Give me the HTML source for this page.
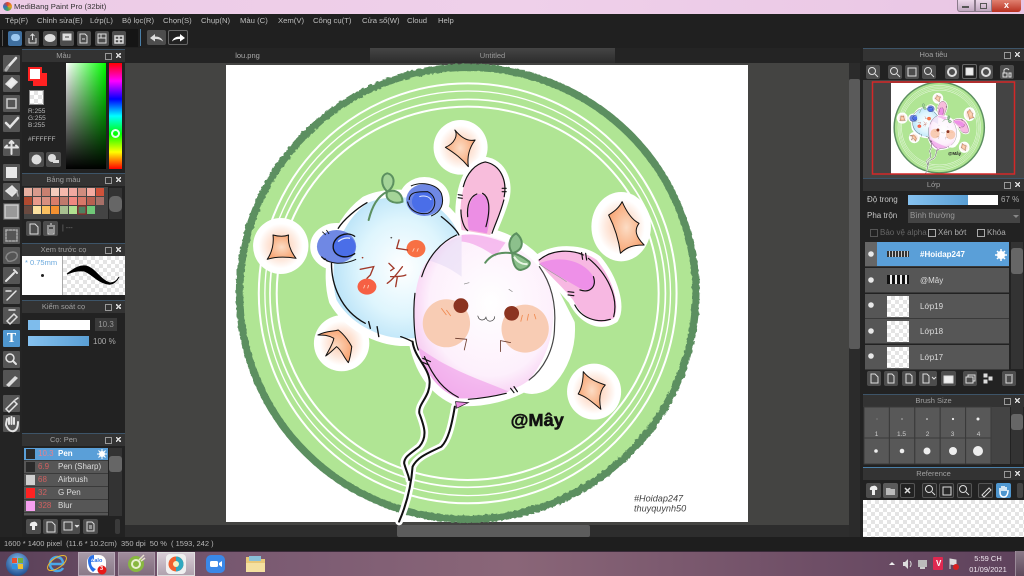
<!DOCTYPE html>
<html lang="vi"><head><meta charset="utf-8"><title>MediBang Paint Pro</title>
<style>
html,body{margin:0;padding:0;width:1024px;height:576px;overflow:hidden;background:#1f1f1f;font-family:"Liberation Sans","DejaVu Sans",sans-serif;color:#bbb}
div,span{position:absolute;box-sizing:border-box;white-space:nowrap}
.t{font-size:8px;line-height:10px;color:#c4c4c4}
.m{font-size:7.700px;line-height:10px;color:#bdbdbd;top:16px}
.hd{background:#333;border-top:1px solid #3d5468;height:13px;text-align:center;font-size:7.500px;line-height:12px;color:#a0a0a0;padding-right:20px}
.hd:after{content:"";position:absolute;right:4px;top:3px;width:5px;height:5px;background:linear-gradient(45deg,transparent 40%,#ddd 40%,#ddd 60%,transparent 60%),linear-gradient(-45deg,transparent 40%,#ddd 40%,#ddd 60%,transparent 60%)}
.hd:before{content:"";position:absolute;right:13px;top:3px;width:5px;height:5px;border:1px solid #999}
.b{background:#4d4d4d;border-radius:2px;width:15px;height:15px}
.tb{background:#555;border-radius:1px;width:17px;height:17px;left:3px}
.ck{background:repeating-conic-gradient(#e4e4e4 0 25%,#fff 0 50%) 0 0/8px 8px}
svg{position:absolute;overflow:visible}
.row{left:24px;width:84px;height:13px;background:#565656;border-bottom:1px solid #3a3a3a;font-size:8px;line-height:12px;color:#ddd}
.lay{left:865px;width:144px;height:25px;background:#565656;border-bottom:1px solid #3a3a3a;font-size:8px;line-height:25px;color:#ddd}
.cb{width:8px;height:8px;border:1px solid #aaa}
</style></head><body>

<!-- title bar -->
<div style="left:0;top:0;width:1024px;height:14px;background:linear-gradient(90deg,#eccbe6,#efd0ea 50%,#e9c6e4)"></div>
<div style="left:3px;top:2px;width:9px;height:9px;border-radius:50%;background:conic-gradient(#e04030,#e8a020,#40a060,#3070c0,#e04030)"></div>
<div style="left:14px;top:2px;font-size:7.700px;line-height:10px;color:#333">MediBang Paint Pro (32bit)</div>
<div style="left:957px;top:0;width:18px;height:12px;background:linear-gradient(#ecd8ea,#c0a8c0);border:1px solid #8a7a8a;border-top:0;border-radius:0 0 0 3px"></div>
<div style="left:962px;top:6px;width:7px;height:2px;background:#555"></div>
<div style="left:975px;top:0;width:17px;height:12px;background:linear-gradient(#ecd8ea,#c0a8c0);border:1px solid #8a7a8a;border-top:0"></div>
<div style="left:980px;top:3px;width:7px;height:6px;border:1px solid #555"></div>
<div style="left:992px;top:0;width:29px;height:12px;background:linear-gradient(#e08070,#b83020);border-radius:0 0 3px 0"></div>
<div style="left:992px;top:0;width:29px;text-align:center;font-size:9px;line-height:11px;color:#fff;font-weight:bold">x</div>

<!-- menu -->
<div style="left:0;top:14px;width:1024px;height:34px;background:#202020"></div>
<span class="m" style="left:5px">Tệp(F)</span>
<span class="m" style="left:37px">Chỉnh sửa(E)</span>
<span class="m" style="left:90px">Lớp(L)</span>
<span class="m" style="left:122px">Bộ lọc(R)</span>
<span class="m" style="left:163px">Chọn(S)</span>
<span class="m" style="left:201px">Chụp(N)</span>
<span class="m" style="left:240px">Màu (C)</span>
<span class="m" style="left:278px">Xem(V)</span>
<span class="m" style="left:313px">Công cụ(T)</span>
<span class="m" style="left:362px">Cửa sổ(W)</span>
<span class="m" style="left:407px">Cloud</span>
<span class="m" style="left:438px">Help</span>

<!-- toolbar -->
<div style="left:0;top:29px;width:138px;height:18px;background:#151515"></div>
<div style="left:2px;top:30px;width:1px;height:16px;background:#555"></div>
<div class="b" style="left:8px;top:31px;width:14px;background:#3f6f9f"></div>
<div style="left:11px;top:34px;width:9px;height:7px;border-radius:4px;background:#9cc8f0"></div>
<div class="b" style="left:25px;top:31px;width:14px"></div>
<div class="b" style="left:43px;top:31px;width:14px"></div>
<div class="b" style="left:60px;top:31px;width:14px"></div>
<div class="b" style="left:77px;top:31px;width:14px"></div>
<div class="b" style="left:95px;top:31px;width:14px"></div>
<div class="b" style="left:112px;top:31px;width:14px"></div>
<svg style="left:0;top:0" width="200" height="48" fill="none" stroke="#ddd" stroke-width="1">
<path d="M29 38v5h7v-5M32.500 40v-6M30.500 36l2-2 2 2"/>
<ellipse cx="50" cy="38" rx="5" ry="3.500" fill="#ddd"/>
<rect x="63" y="34" width="8" height="6" fill="#ddd"/><path d="M65 37h4" stroke="#444"/>
<path d="M80 34h5l2 2v7h-7zM82 39h3"/>
<path d="M98 34h8v9h-8zM98 38h8M101 34v4"/>
<path d="M115 36h8v7h-8zM115 39.500h8M119 36v7" stroke-width="1.500"/>
</svg>
<div style="left:140px;top:29px;width:1px;height:17px;background:#4a7fa8"></div>
<div class="b" style="left:147px;top:30px;width:19px;height:15px"></div>
<svg style="left:0;top:0" width="200" height="48"><path d="M150 38l5-4v2.500c4 0 7 1.500 8 5-2-2-5-2.500-8-2.500v2.500z" fill="#ddd"/></svg>
<div style="left:168px;top:30px;width:20px;height:15px;border:1px solid #666;border-radius:2px;background:#222"></div>
<svg style="left:0;top:0" width="200" height="48"><path d="M185 38l-5-4v2.500c-4 0-7 1.500-8 5 2-2 5-2.500 8-2.500v2.500z" fill="#fff"/></svg>

<!-- tabs + canvas area -->
<div style="left:125px;top:48px;width:735px;height:15px;background:#242424"></div>
<div style="left:370px;top:48px;width:245px;height:15px;background:linear-gradient(#454545,#2c2c2c)"></div>
<div style="left:125px;top:51px;width:245px;text-align:center;font-size:7.500px;line-height:10px;color:#aaa">lou.png</div>
<div style="left:370px;top:51px;width:245px;text-align:center;font-size:7.500px;line-height:10px;color:#999">Untitled</div>
<div style="left:125px;top:63px;width:724px;height:462px;background:#444442"></div>
<div style="left:125px;top:525px;width:724px;height:12px;background:#2d2d2d"></div>
<div style="left:397px;top:525px;width:193px;height:12px;background:#5c5c5c;border-radius:2px"></div>
<div style="left:849px;top:63px;width:11px;height:474px;background:#2b2b2b"></div>
<div style="left:849px;top:79px;width:11px;height:270px;background:#5a5a5a;border-radius:2px"></div>
<div style="left:226px;top:65px;width:522px;height:457px;background:#fff"></div>

<!-- ARTWORK -->
<svg style="left:0;top:0" width="1024" height="576" viewBox="0 0 1024 576">
<defs>
<radialGradient id="bl" cx=".55" cy=".5" r=".62"><stop offset="0" stop-color="#fff"/><stop offset=".55" stop-color="#def5fd"/><stop offset="1" stop-color="#b0def6"/></radialGradient>
<radialGradient id="pk" cx=".55" cy=".42" r=".68"><stop offset="0" stop-color="#fff"/><stop offset=".65" stop-color="#fdf0fc"/><stop offset=".9" stop-color="#f6c8f0"/><stop offset="1" stop-color="#f0a4ea"/></radialGradient>
<radialGradient id="st"><stop offset="0" stop-color="#fcdcc4"/><stop offset="1" stop-color="#f8a878"/></radialGradient>
<radialGradient id="gl"><stop offset="0" stop-color="#fbc8a8"/><stop offset=".5" stop-color="#fee8dc"/><stop offset=".8" stop-color="#fff"/><stop offset="1" stop-color="#fff"/></radialGradient>
<filter id="rough" x="-5%" y="-5%" width="110%" height="110%"><feTurbulence type="fractalNoise" baseFrequency=".09" numOctaves="2" seed="3"/><feDisplacementMap in="SourceGraphic" scale="9"/></filter>
<g id="art">
<ellipse cx="718" cy="700" rx="675" ry="678" fill="#b0e594"/>
<ellipse cx="718" cy="700" rx="675" ry="678" fill="none" stroke="#5c8f60" stroke-width="22" filter="url(#rough)"/>
<g fill="none" stroke="#fff">
<ellipse cx="718" cy="700" rx="618" ry="630" stroke-width="6"/>
<ellipse cx="718" cy="700" rx="600" ry="607" stroke-width="4"/>
<ellipse cx="718" cy="700" rx="585" ry="582" stroke-width="5"/>
<ellipse cx="718" cy="700" rx="565" ry="560" stroke-width="6"/>
</g>
<g fill="url(#gl)">
<ellipse cx="697" cy="262" rx="80" ry="82"/><ellipse cx="165" cy="558" rx="82" ry="84"/><ellipse cx="345" cy="850" rx="82" ry="84"/><ellipse cx="1172" cy="500" rx="88" ry="104"/><ellipse cx="1092" cy="995" rx="80" ry="84"/>
</g>
<!-- white outlines -->
<g fill="#fff" stroke="#fff" stroke-width="46" stroke-linejoin="round">
<path d="M420 430C480 400 600 405 650 460 690 500 700 540 690 570L570 835 520 835C450 830 370 790 330 720 310 650 315 510 420 430Z"/>
<ellipse cx="330" cy="560" rx="55" ry="48"/><ellipse cx="590" cy="420" rx="52" ry="46"/>
<path d="M700 525C800 510 900 570 950 650 990 740 975 870 900 960 850 1000 760 1020 690 1015 630 990 590 940 570 860 550 760 560 650 600 600 630 560 660 530 700 525Z"/>
</g>
<g fill="#fff" stroke="#fff" stroke-width="30" stroke-linejoin="round">
<path d="M700 510C690 440 700 330 765 305 820 310 840 370 825 420 810 470 790 510 785 525Z"/>
<path d="M925 600C980 560 1060 570 1100 600 1150 660 1170 740 1150 775 1110 800 1060 780 1030 720Z"/>
<path d="M950 650L1020 790C1025 860 1000 930 950 975 920 990 900 990 880 980Z"/>
</g>
<g fill="none" stroke="#fff" stroke-width="22" stroke-linecap="round">
<path d="M555 845C560 890 600 920 605 960 610 1010 570 1030 575 1060 590 1100 600 1130 575 1160 550 1180 530 1190 530 1210 535 1230 545 1250 545 1260"/>
<path d="M680 1040C670 1100 660 1140 640 1160 600 1180 570 1190 555 1220 550 1290 530 1350 515 1385"/>
</g>
<!-- blue balloon -->
<path d="M420 430C480 400 600 405 650 460 690 500 700 540 690 570L570 835 520 835C450 830 370 790 330 720 310 650 315 510 420 430Z" fill="url(#bl)"/>
<g fill="none" stroke="#111" stroke-width="4" stroke-linecap="round">
<path d="M420 428C390 445 350 480 335 505"/><path d="M640 470C665 490 685 510 692 525"/>
<path d="M315 610C315 670 340 750 415 790"/><path d="M425 785L430 805M450 800L455 830M520 830C535 835 545 840 555 845"/>
</g>
<!-- top ear -->
<path d="M700 510C690 440 700 330 765 305 820 310 840 370 825 420 810 470 790 510 785 525Z" fill="#f8bddc"/>
<path d="M722 510C712 470 720 410 750 402 785 400 790 460 775 520Z" fill="#ec8ee4"/>
<g fill="none" stroke="#111" stroke-width="3.500" stroke-linecap="round">
<path d="M705 380C715 340 740 312 770 306 815 315 835 360 826 410M825 420C815 460 800 490 790 520"/><path d="M698 450C698 480 708 505 718 512"/>
<path d="M718 470C715 435 725 410 745 402M762 400C780 410 788 440 772 500"/><path d="M690 404L702 406M690 413L702 415M820 385L832 385M820 395L832 395"/>
</g>
<!-- right ear -->
<path d="M925 600C980 560 1060 570 1100 600 1150 660 1170 740 1150 775 1110 800 1060 780 1030 720 990 670 950 640 925 600Z" fill="#f7b8e2"/>
<path d="M930 610C990 585 1060 600 1090 650 1100 680 1080 700 1050 685 1010 660 960 635 930 610Z" fill="#ee90e8"/>
<g fill="none" stroke="#111" stroke-width="3.500" stroke-linecap="round">
<path d="M930 600C970 565 1030 570 1060 585M1075 595C1130 640 1165 710 1150 770M1140 778C1100 790 1055 775 1035 735"/><path d="M1050 690C1080 700 1100 680 1090 650"/><path d="M930 612C960 635 990 650 1010 665" stroke="#999" stroke-width="2"/>
<path d="M1055 578L1058 598M1067 580L1070 600M1015 695L1032 697M1015 705L1032 707"/>
</g>
<!-- pink balloon -->
<path d="M700 525C800 510 900 570 950 650 990 740 975 870 900 960 850 1000 760 1020 690 1015 630 990 590 940 570 860 550 760 560 650 600 600 630 560 660 530 700 525Z" fill="url(#pk)"/>
<path d="M570 860C590 940 630 990 690 1015 740 1015 800 1010 840 995 760 960 660 930 570 860Z" fill="#f0a0ea" opacity=".65"/>
<path d="M700 525C740 520 780 530 830 548L800 590C760 560 720 545 700 545Z" fill="#f090e4" opacity=".55"/>
<path d="M600 600C630 560 680 530 700 530L700 650C660 620 630 610 600 600Z" fill="#d0c8f0" opacity=".3"/>
<ellipse cx="655" cy="790" rx="70" ry="72" fill="#f8ccb4"/><ellipse cx="888" cy="806" rx="70" ry="72" fill="#f8ccb4"/>
<circle cx="698" cy="737" r="22" fill="#8b3320"/><circle cx="848" cy="760" r="22" fill="#8b3320"/>
<g fill="none" stroke="#111" stroke-width="3.500" stroke-linecap="round">
<path d="M685 525C640 545 600 590 582 650"/><path d="M562 700C555 760 560 840 572 870"/><path d="M590 890C620 960 650 990 690 1012M720 1018C760 1015 800 1008 832 1000"/>
<path d="M845 985L855 998M855 980L865 995"/><path d="M900 960C940 930 975 870 975 800 980 730 965 670 930 620" stroke="#444"/><path d="M585 895L608 905M580 905L603 915"/>
<path d="M748 768C752 785 768 782 772 772 776 790 798 785 798 770" stroke="#333" stroke-width="2"/>
<path d="M682 835L715 838 708 870M845 848L815 842 815 875" stroke="#6a3a2c" stroke-width="2.500"/>
<path d="M708 672L722 668M840 688L850 695" stroke="#888" stroke-width="2"/>
</g>
<path d="M682 1025L720 1028 685 1045Z" fill="#ec8ee4" stroke="#111" stroke-width="2"/>
<!-- blue bumps -->
<ellipse cx="330" cy="560" rx="58" ry="50" fill="#6f88e4"/>
<circle cx="352" cy="560" r="34" fill="#4a6ee8"/><path d="M385 530C360 510 320 530 320 560 320 590 360 600 385 580" fill="none" stroke="#111" stroke-width="4"/><path d="M285 590C310 615 350 615 388 598" fill="none" stroke="#111" stroke-width="3"/>
<path d="M335 545C345 535 360 532 370 535" stroke="#dfe8ff" stroke-width="4" fill="none"/>
<path d="M288 515L298 525M300 510L308 522M285 590L295 600M295 595L303 605" stroke="#111" stroke-width="2.500"/>
<ellipse cx="590" cy="420" rx="54" ry="48" fill="#6f88e4"/>
<circle cx="585" cy="425" r="32" fill="#4a6ee8"/><path d="M545 420C545 395 570 395 600 395 630 410 625 450 600 460 570 465 545 450 540 425" fill="none" stroke="#111" stroke-width="3"/><path d="M550 378C580 365 625 370 640 400 650 430 640 455 610 468" fill="none" stroke="#111" stroke-width="3"/>
<path d="M575 410C590 405 605 410 610 420" stroke="#dfe8ff" stroke-width="3" fill="none"/>
<!-- leaves -->
<path d="M425 480C435 440 450 410 480 395" fill="none" stroke="#5c9060" stroke-width="6" stroke-linecap="round"/>
<path d="M480 395C460 375 460 345 480 340 505 345 505 380 480 395ZM480 395C510 385 525 405 525 425 500 435 470 420 480 395Z" fill="#a4d498" stroke="#5c9060" stroke-width="6"/>
<path d="M770 608C790 580 820 575 850 580" fill="none" stroke="#5c9060" stroke-width="6" stroke-linecap="round"/>
<path d="M850 580C830 550 850 525 862 520 885 540 885 570 850 580ZM850 580C850 610 860 630 875 630 900 625 905 610 900 605 880 590 860 580 850 580Z" fill="#8cc08c" stroke="#5c9060" stroke-width="6"/>
<path d="M855 590C865 605 880 615 895 612" stroke="#e8f6e4" stroke-width="6" fill="none"/>
<!-- blue face -->
<ellipse cx="565" cy="566" rx="28" ry="26" fill="#f86030" opacity=".9"/><ellipse cx="420" cy="680" rx="28" ry="24" fill="#f85030" opacity=".9"/>
<g fill="none" stroke="#a03828" stroke-width="4" stroke-linecap="round">
<path d="M515 540L508 565 540 570"/><path d="M400 628L440 620 430 645 420 655"/><path d="M485 610L500 625 490 632"/><path d="M525 620C510 640 495 660 480 670M490 650C505 650 525 650 535 645M510 650L505 680"/>
</g>
<circle cx="492" cy="533" r="2.500" fill="#555"/><circle cx="407" cy="593" r="2.500" fill="#a03828"/>
<path d="M555 575L560 565M568 575L572 565M410 685L414 675M422 685L425 675" stroke="#ffd0b8" stroke-width="2.500"/>
<path d="M640 745L655 765M655 750L668 768M880 765L875 785M898 762L894 782M915 762L920 778" stroke="#f08a50" stroke-width="2.500"/>
<!-- stars -->
<g stroke="#111" stroke-width="3" stroke-linejoin="round" fill="url(#st)">
<path d="M652 262C680 250 690 225 680 210 700 235 720 245 740 240 725 260 715 285 720 320 700 295 680 280 652 262Z"/>
<path d="M142 525C160 530 175 530 188 525 185 550 195 575 210 595 180 590 150 590 125 598 140 575 145 550 142 525Z"/>
<path d="M275 825C300 812 320 815 335 810 355 825 370 850 375 860 372 885 368 900 365 908 350 890 345 870 330 860 320 870 310 880 298 888 310 865 320 850 322 835 305 825 290 825 275 825Z"/>
<path d="M1175 425C1190 460 1205 480 1225 490 1210 510 1215 530 1240 555 1210 555 1190 560 1170 580 1165 540 1155 505 1135 465 1150 455 1165 445 1175 425Z"/>
<path d="M1060 935C1075 955 1095 965 1125 975 1110 990 1105 1015 1112 1048 1090 1030 1070 1010 1045 1002 1055 985 1060 960 1060 935Z"/>
</g>
<!-- strings -->
<g fill="none" stroke="#111" stroke-width="6" stroke-linecap="round">
<path d="M555 845C560 890 600 920 605 960 610 1010 570 1030 575 1060 590 1100 600 1130 575 1160 550 1180 530 1190 530 1210 535 1230 545 1250 545 1260"/>
<path d="M680 1040C670 1100 660 1140 640 1160 600 1180 570 1190 555 1220 550 1290 530 1350 515 1385"/>
</g>
</g>
</defs>
<g transform="translate(225 60) scale(.338 .3333)">
<use href="#art"/>
<text x="845" y="1098" font-family="Liberation Sans" font-weight="bold" font-size="54" fill="#111" stroke="#111" stroke-width="1.500">@Mây</text>
<text x="1210" y="1325" font-family="Liberation Sans" font-style="italic" font-size="27" fill="#444">#Hoidap247</text>
<text x="1210" y="1354" font-family="Liberation Sans" font-style="italic" font-size="27" fill="#444">thuyquynh50</text>
</g>
</svg>

<!-- tools column -->
<div style="left:0;top:48px;width:22px;height:489px;background:#242424"></div>
<div class="tb" style="top:55px"></div><div class="tb" style="top:75px"></div><div class="tb" style="top:95px"></div><div class="tb" style="top:115px"></div>
<div class="tb" style="top:139px"></div><div class="tb" style="top:164px"></div><div class="tb" style="top:183px"></div><div class="tb" style="top:203px"></div>
<div class="tb" style="top:227px"></div><div class="tb" style="top:247px"></div><div class="tb" style="top:267px"></div><div class="tb" style="top:287px"></div>
<div class="tb" style="top:307px"></div>
<div class="tb" style="top:330px;background:#4f97d0"></div>
<div class="tb" style="top:351px"></div><div class="tb" style="top:370px"></div><div class="tb" style="top:395px"></div><div class="tb" style="top:415px"></div>
<span style="left:3px;top:330px;width:17px;text-align:center;font:bold 14px/17px 'Liberation Serif',serif;color:#fff">T</span>
<svg style="left:0;top:0" width="22" height="440" fill="none" stroke="#e4e4e4" stroke-width="1.500" stroke-linecap="round">
<path d="M7 68L16 58" stroke-width="2.500"/><path d="M6 70l2-3" stroke="#aaa" stroke-width="3"/>
<path d="M6 84l6-6 5 4-6 6z" fill="#eee"/><rect x="7" y="99" width="9" height="9" stroke="#ccc"/>
<path d="M6 123l4 4 8-9" stroke-width="2.500"/>
<path d="M11.500 141v13M5 147.500h13M11.500 141l-2 2M11.500 141l2 2M5 147.500l2-2M18 147.500l-2-2" stroke-width="2"/>
<rect x="6" y="167" width="11" height="11" fill="#e8e8e8" stroke="none"/>
<path d="M6 191l6-5 5 5-5 5z" fill="#ddd"/><path d="M17 192l1 4" stroke="#aaa"/>
<rect x="5" y="205" width="13" height="13" fill="#999" stroke="#ccc"/>
<rect x="6" y="230" width="11" height="11" stroke="#aaa" stroke-dasharray="2 1.500"/>
<path d="M6 258c0-4 4-6 7-6s5 2 4 5-6 5-9 4z" stroke="#888" stroke-dasharray="2 1"/>
<path d="M6 281l8-8M14 270l3 3" stroke-width="2"/>
<path d="M7 300l9-9M6 291h5" stroke-width="1.500"/>
<path d="M7 321l7-7 3 3-7 7zM9 310h6" stroke="#ddd"/>
<circle cx="10" cy="358" r="4"/><path d="M13 361l3 3" stroke-width="2"/>
<path d="M6 385l9-9 3 2-9 9z" fill="#ddd" stroke="none"/>
<path d="M6 409l8-8 3 3-8 8z"/><path d="M15 400l3-2"/>
<path d="M6 425c0-3 1-4 1-6M9 424v-6M11.500 424v-7M14 424v-6M6 425c2 5 5 7 8 6s4-5 4-9" stroke-width="2"/>
</svg>

<!-- left panels -->
<div style="left:22px;top:48px;width:103px;height:489px;background:#222"></div>
<div class="hd" style="left:22px;top:49px;width:103px">Màu</div>
<div style="left:33px;top:73px;width:14px;height:13px;background:#f22"></div>
<div style="left:28px;top:67px;width:14px;height:14px;background:#fff;border:2px solid #f22"></div>
<div class="ck" style="left:29px;top:90px;width:15px;height:15px;border:1px solid #888"></div>
<span class="t" style="left:28px;top:108px;font-size:6.500px;line-height:7px;color:#bbb">R:255<br>G:255<br>B:255</span>
<span class="t" style="left:28px;top:135px;font-size:6.500px;color:#bbb">#FFFFFF</span>
<div class="b" style="left:29px;top:152px"></div><div class="b" style="left:46px;top:152px"></div>
<svg style="left:0;top:0" width="80" height="170"><circle cx="36.500" cy="159.500" r="5" fill="#ddd"/><circle cx="52" cy="158" r="4" fill="#ddd"/><rect x="53" y="160" width="6" height="3" fill="#ddd"/></svg>
<div style="left:66px;top:63px;width:40px;height:106px;background:linear-gradient(#0000,#000),linear-gradient(90deg,#fff,#00ff00)"></div>
<div style="left:109px;top:63px;width:13px;height:106px;background:linear-gradient(#f00,#f0f 17%,#00f 34%,#0ff 50%,#0f0 67%,#ff0 84%,#f00)"></div>
<div style="left:111px;top:129px;width:9px;height:9px;border:2px solid #dfe;border-radius:50%"></div>

<div class="hd" style="left:22px;top:173px;width:103px">Bảng màu</div>
<div style="left:24px;top:187px;width:84px;height:32px;background:#444"></div>
<svg style="left:24px;top:188px" width="84" height="30">
<g><rect x="0" width="8" height="8" fill="#e8b0a0"/><rect x="9" width="8" height="8" fill="#d89a8c"/><rect x="18" width="8" height="8" fill="#c98070"/><rect x="27" width="8" height="8" fill="#f3cdbd"/><rect x="36" width="8" height="8" fill="#f5b8ac"/><rect x="45" width="8" height="8" fill="#f0a8a0"/><rect x="54" width="8" height="8" fill="#d08c7e"/><rect x="63" width="8" height="8" fill="#f5aba0"/><rect x="72" width="8" height="8" fill="#d0523a"/></g>
<g transform="translate(0 9)"><rect x="0" width="8" height="8" fill="#b04a30"/><rect x="9" width="8" height="8" fill="#e8998a"/><rect x="18" width="8" height="8" fill="#d89080"/><rect x="27" width="8" height="8" fill="#d87d6a"/><rect x="36" width="8" height="8" fill="#c07a6c"/><rect x="45" width="8" height="8" fill="#f08880"/><rect x="54" width="8" height="8" fill="#d87868"/><rect x="63" width="8" height="8" fill="#b86050"/><rect x="72" width="8" height="8" fill="#a87068"/></g>
<g transform="translate(0 18)"><rect x="0" width="8" height="8" fill="#6a4a40"/><rect x="9" width="8" height="8" fill="#fbe0a0"/><rect x="18" width="8" height="8" fill="#fbc060"/><rect x="27" width="8" height="8" fill="#f39030"/><rect x="36" width="8" height="8" fill="#a8c090"/><rect x="45" width="8" height="8" fill="#b0e090"/><rect x="54" width="8" height="8" fill="#508060" stroke="#a02020"/><rect x="63" width="8" height="8" fill="#70c878"/></g>
</svg>
<div style="left:109px;top:188px;width:13px;height:31px;background:#333"></div>
<div style="left:109px;top:196px;width:13px;height:16px;background:#666;border-radius:5px"></div>
<div class="b" style="left:26px;top:221px"></div><div class="b" style="left:43px;top:221px"></div>
<svg style="left:0;top:0" width="80" height="240" fill="none" stroke="#ddd"><path d="M30 224h5l3 3v7h-8z"/><path d="M47 226h8M48 227v7h6v-7M50 224h2M50 229v4M52 229v4"/></svg>
<span class="t" style="left:62px;top:224px;font-size:7px;color:#777">| ---</span>

<div class="hd" style="left:22px;top:243px;width:103px">Xem trước cọ</div>
<div style="left:22px;top:256px;width:40px;height:39px;background:#fff"></div>
<div class="ck" style="left:62px;top:256px;width:63px;height:39px;border-left:1px solid #aaa"></div>
<span style="left:25px;top:258px;font-size:7.500px;line-height:9px;color:#6aa8dc">* 0.75mm</span>
<div style="left:41px;top:274px;width:3px;height:3px;border-radius:50%;background:#222"></div>
<svg style="left:0;top:0" width="125" height="295"><path d="M67 274C75 268 80 265 86 266 95 268 100 280 110 283 114 283 117 281 119 277 116 282 112 285 108 284 98 283 90 272 84 271 78 270 72 272 67 274Z" fill="#000" stroke="#000" stroke-width="1"/></svg>

<div class="hd" style="left:22px;top:300px;width:103px">Kiểm soát cọ</div>
<div style="left:28px;top:320px;width:62px;height:10px;background:#fff"></div>
<div style="left:28px;top:320px;width:12px;height:10px;background:#7ebcec"></div>
<div style="left:95px;top:318px;width:22px;height:13px;background:#3a3a3a;font-size:8px;line-height:13px;text-align:center;color:#999">10.3</div>
<div style="left:28px;top:336px;width:61px;height:10px;background:linear-gradient(90deg,#86c2f0,#5a9fd4)"></div>
<span class="t" style="left:93px;top:337px;color:#aaa">100 %</span>

<div class="hd" style="left:22px;top:433px;width:103px">Cọ: Pen</div>
<div style="left:22px;top:446px;width:103px;height:2px;background:#222"></div>
<div class="row" style="top:448px;background:#5a9fd8;color:#fff;font-weight:bold"><span style="left:14px;color:#e8808c;font-weight:normal">10.3</span><span style="left:34px">Pen</span></div>
<div class="row" style="top:461px"><span style="left:14px;color:#d06060">6.9</span><span style="left:34px">Pen (Sharp)</span></div>
<div class="row" style="top:474px"><span style="left:14px;color:#d06060">68</span><span style="left:34px">Airbrush</span></div>
<div class="row" style="top:487px"><span style="left:14px;color:#d06060">32</span><span style="left:34px">G Pen</span></div>
<div class="row" style="top:500px"><span style="left:14px;color:#d06060">328</span><span style="left:34px">Blur</span></div>
<div class="row" style="top:513px;height:3px"></div>
<div style="left:26px;top:449px;width:9px;height:10px;background:#2a2a2a"></div>
<div style="left:26px;top:462px;width:9px;height:10px;background:#2a2a2a"></div>
<div style="left:26px;top:475px;width:9px;height:10px;background:#d0d0d0"></div>
<div style="left:26px;top:488px;width:9px;height:10px;background:#f22"></div>
<div style="left:26px;top:501px;width:9px;height:10px;background:#f7a0f0"></div>
<svg style="left:0;top:0" width="110" height="460"><circle cx="102" cy="454" r="3" fill="#fff"/><path d="M102 449v10M97 454h10M98.500 450.500l7 7M105.500 450.500l-7 7" stroke="#fff"/></svg>
<div style="left:109px;top:448px;width:13px;height:68px;background:#333"></div>
<div style="left:109px;top:456px;width:13px;height:16px;background:#666;border-radius:3px"></div>
<div class="b" style="left:26px;top:519px"></div><div class="b" style="left:43px;top:519px"></div><div class="b" style="left:61px;top:519px;width:19px"></div><div class="b" style="left:83px;top:519px"></div><div class="b" style="left:115px;top:519px;width:5px;background:#3a3a3a"></div>
<svg style="left:0;top:0" width="100" height="535" fill="none" stroke="#ddd"><path d="M30 526a3 3 0 0 1 3-4 3 3 0 0 1 4 4h-2v4h-3v-4z" fill="#eee" stroke="none"/><path d="M47 522h5l3 3v7h-8z"/><path d="M64 522h8v8h-8z"/><path d="M75 525l2 2 2-2" fill="#ddd"/><path d="M87 522h5l2 2v7h-7zM89 526h3M89 528h3"/></svg>

<!-- status bar -->
<div style="left:0;top:537px;width:1024px;height:14px;background:#1e1e1e"></div>
<span class="t" style="left:4px;top:539px;font-size:7.500px;color:#b8b8b8">1600 * 1400 pixel &nbsp;(11.6 * 10.2cm) &nbsp;350 dpi &nbsp;50 % &nbsp;( 1593, 242 )</span>

<!-- right panel -->
<div style="left:860px;top:48px;width:164px;height:489px;background:#222"></div>
<div class="hd" style="left:863px;top:48px;width:161px">Hoa tiêu</div>
<div class="b" style="left:866px;top:65px;width:14px;height:14px"></div>
<div class="b" style="left:888px;top:65px;width:14px;height:14px"></div><div class="b" style="left:905px;top:65px;width:14px;height:14px"></div><div class="b" style="left:922px;top:65px;width:14px;height:14px"></div>
<div class="b" style="left:945px;top:65px;width:14px;height:14px"></div>
<div style="left:962px;top:64px;width:15px;height:15px;background:#222;border:1px solid #666;border-radius:2px"></div>
<div class="b" style="left:979px;top:65px;width:14px;height:14px"></div>
<div class="b" style="left:1000px;top:65px;width:14px;height:14px"></div>
<svg style="left:0;top:0" width="1024" height="85" fill="none" stroke="#e0e0e0">
<circle cx="872" cy="71" r="3.500"/><path d="M875 74l3 3"/><circle cx="894" cy="71" r="3.500"/><path d="M897 74l3 3"/><rect x="908" y="68" width="8" height="8"/><circle cx="928" cy="71" r="3.500"/><path d="M931 74l3 3"/>
<circle cx="952" cy="72" r="4" stroke-width="2"/><rect x="966" y="68" width="7" height="7" fill="#eee"/><circle cx="986" cy="72" r="4" stroke-width="2"/><path d="M1004 73v-3a3 3 0 0 1 5 0M1003 73h4v4h-4zM1009 73h2v4h-2z"/>
</svg>
<div style="left:863px;top:80px;width:161px;height:98px;background:#444"></div>
<div style="left:891px;top:83px;width:105px;height:91px;background:#fff"></div>
<svg style="left:0;top:0" width="1024" height="180" viewBox="0 0 1024 180"><g transform="translate(891.300 80.800) scale(.0668 .0668)"><use href="#art"/></g>
<text x="948" y="155" font-family="Liberation Sans" font-weight="bold" font-size="4.500" fill="#222">@Mây</text>
<rect x="872.500" y="82" width="142" height="92" fill="none" stroke="#d42828" stroke-width="1.500"/></svg>

<div class="hd" style="left:863px;top:178px;width:161px">Lớp</div>
<span class="t" style="left:867px;top:195px">Độ trong</span>
<div style="left:908px;top:195px;width:90px;height:10px;background:#fff"></div>
<div style="left:908px;top:195px;width:60px;height:10px;background:linear-gradient(90deg,#86c2f0,#5a9fd4)"></div>
<span class="t" style="left:1001px;top:195px;color:#aaa">67 %</span>
<span class="t" style="left:867px;top:211px">Pha trộn</span>
<div style="left:908px;top:209px;width:112px;height:14px;background:#444;font-size:8px;line-height:14px;padding-left:2px;color:#999">Bình thường</div>
<div style="left:1013px;top:215px;border:3px solid transparent;border-top-color:#888"></div>
<div class="cb" style="left:870px;top:229px;border-color:#555"></div><span class="t" style="left:880px;top:228px;color:#666">Bảo vệ alpha</span>
<div class="cb" style="left:928px;top:229px"></div><span class="t" style="left:938px;top:228px;color:#aaa">Xén bớt</span>
<div class="cb" style="left:977px;top:229px"></div><span class="t" style="left:987px;top:228px;color:#aaa">Khóa</span>

<div class="lay" style="top:242px;background:#666"></div><div class="lay" style="top:242px;left:877px;width:132px;background:#5a9fd8;color:#fff;font-weight:bold"><span style="left:43px">#Hoidap247</span></div>
<div class="lay" style="top:268px"><span style="left:55px">@Mây</span></div>
<div class="lay" style="top:294px"><span style="left:55px">Lớp19</span></div>
<div class="lay" style="top:319px"><span style="left:55px">Lớp18</span></div>
<div class="lay" style="top:345px"><span style="left:55px">Lớp17</span></div>
<div style="left:887px;top:251px;width:22px;height:6px;background:repeating-linear-gradient(90deg,#333 0 2px,#ccc 2px 3px)"></div>
<div style="left:887px;top:275px;width:22px;height:9px;background:repeating-linear-gradient(90deg,#111 0 3px,#eee 3px 5px)"></div>
<div class="ck" style="left:887px;top:296px;width:22px;height:21px"></div>
<div class="ck" style="left:887px;top:321px;width:22px;height:21px"></div>
<div class="ck" style="left:887px;top:347px;width:22px;height:21px"></div>
<svg style="left:0;top:0" width="1024" height="370" fill="#e8e8e8"><circle cx="871" cy="254" r="2.800"/><circle cx="871" cy="280" r="2.800"/><circle cx="871" cy="305" r="2.800"/><circle cx="871" cy="331" r="2.800"/><circle cx="871" cy="356" r="2.800"/>
<circle cx="1001" cy="255" r="4" fill="#fff"/><path d="M1001 249v12M995 255h12M997 251l8 8M1005 251l-8 8" stroke="#fff" stroke-width="1.500"/></svg>
<div style="left:1011px;top:242px;width:12px;height:127px;background:#333"></div>
<div style="left:1011px;top:248px;width:12px;height:26px;background:#666;border-radius:3px"></div>
<div class="b" style="left:867px;top:371px;width:14px"></div><div class="b" style="left:884px;top:371px;width:14px"></div><div class="b" style="left:902px;top:371px;width:14px"></div><div class="b" style="left:919px;top:371px;width:18px"></div><div class="b" style="left:941px;top:371px"></div><div class="b" style="left:963px;top:371px;width:14px"></div><div style="left:981px;top:371px;width:14px;height:15px;background:#222;border-radius:2px"></div><div class="b" style="left:1002px;top:371px;width:14px"></div>
<svg style="left:0;top:0" width="1024" height="390" fill="none" stroke="#ddd"><path d="M871 374h4l3 3v6h-7zM888 374h4l2 2v7h-6zM906 374h4l2 2v7h-6zM923 374h4l2 2v7h-6zM932 377l2 2 2-2"/><rect x="944" y="376" width="9" height="7" fill="#eee"/><path d="M966 377h7v6h-7zM968 377v-2h7v6h-2M1005 375h8M1006 376v7h6v-7"/><rect x="984" y="374" width="3" height="3" fill="#ddd"/><rect x="984" y="380" width="3" height="3" fill="#ddd"/><rect x="989" y="377" width="3" height="3" fill="#ddd"/></svg>

<div class="hd" style="left:863px;top:394px;width:161px">Brush Size</div>
<div style="left:864px;top:407px;width:146px;height:57px;background:#444"></div>
<svg style="left:0;top:0" width="1024" height="470">
<g fill="#585858" stroke="#3a3a3a"><rect x="864" y="407" width="25.400" height="31"/><rect x="889.400" y="407" width="25.400" height="31"/><rect x="914.800" y="407" width="25.400" height="31"/><rect x="940.200" y="407" width="25.400" height="31"/><rect x="965.600" y="407" width="25.400" height="31"/>
<rect x="864" y="438" width="25.400" height="26"/><rect x="889.400" y="438" width="25.400" height="26"/><rect x="914.800" y="438" width="25.400" height="26"/><rect x="940.200" y="438" width="25.400" height="26"/><rect x="965.600" y="438" width="25.400" height="26"/></g>
<g fill="#eee"><circle cx="877" cy="419" r=".4"/><circle cx="902" cy="419" r=".6"/><circle cx="927" cy="419" r=".8"/><circle cx="953" cy="419" r="1.100"/><circle cx="978" cy="419" r="1.500"/>
<circle cx="876" cy="451" r="1.800"/><circle cx="902" cy="451" r="2.300"/><circle cx="927" cy="451" r="3.500"/><circle cx="953" cy="451" r="4"/><circle cx="978" cy="451" r="5"/></g></svg>
<span class="t" style="left:864px;top:430px;width:25px;text-align:center;font-size:6.500px;color:#ccc">1</span>
<span class="t" style="left:889px;top:430px;width:25px;text-align:center;font-size:6.500px;color:#ccc">1.5</span>
<span class="t" style="left:915px;top:430px;width:25px;text-align:center;font-size:6.500px;color:#ccc">2</span>
<span class="t" style="left:940px;top:430px;width:25px;text-align:center;font-size:6.500px;color:#ccc">3</span>
<span class="t" style="left:966px;top:430px;width:25px;text-align:center;font-size:6.500px;color:#ccc">4</span>
<div style="left:1011px;top:407px;width:12px;height:57px;background:#333"></div>
<div style="left:1011px;top:414px;width:12px;height:16px;background:#666;border-radius:3px"></div>

<div class="hd" style="left:863px;top:467px;width:161px;border-top-color:#4a7fa8">Reference</div>
<div class="b" style="left:866px;top:483px"></div><div class="b" style="left:883px;top:483px;background:#5c5c5c"></div><div style="left:900px;top:483px;width:15px;height:15px;background:#222;border:1px solid #555;border-radius:2px"></div>
<div style="left:922px;top:483px;width:15px;height:15px;background:#2a2a2a;border:1px solid #555;border-radius:2px"></div><div style="left:939px;top:483px;width:15px;height:15px;background:#2a2a2a;border:1px solid #555;border-radius:2px"></div><div style="left:957px;top:483px;width:15px;height:15px;background:#2a2a2a;border:1px solid #555;border-radius:2px"></div>
<div style="left:978px;top:483px;width:15px;height:15px;background:#2a2a2a;border:1px solid #555;border-radius:2px"></div>
<div class="b" style="left:996px;top:483px;background:#4f97d0"></div>
<div class="b" style="left:1017px;top:483px;width:6px;background:#444"></div>
<svg style="left:0;top:0" width="1024" height="500" fill="none" stroke="#ddd"><path d="M870 490a3 3 0 0 1 3-4 3 3 0 0 1 4 4h-2v5h-3v-5z" fill="#eee" stroke="none"/><path d="M886 488h4l1 1h4v6h-9z" fill="#bbb" stroke="none"/><path d="M905 488l5 5M910 488l-5 5" stroke-width="1.500"/><circle cx="929" cy="489" r="3.500"/><path d="M932 492l3 3"/><rect x="943" y="487" width="8" height="8"/><circle cx="963" cy="489" r="3.500"/><path d="M966 492l3 3"/><path d="M982 495l7-7 2 2-7 7z"/>
<path d="M1000 492v-4M1002 491v-5M1004 491v-5M1006 491v-4M1000 492c0 4 2 5 4 5s4-2 4-7" stroke="#fff" stroke-width="1.500"/></svg>
<div class="ck" style="left:863px;top:500px;width:161px;height:37px"></div>

<!-- taskbar -->
<div style="left:0;top:551px;width:1024px;height:25px;background:linear-gradient(90deg,#5a4058,#7a5a72 25%,#8a6678 50%,#6e4e66 80%,#5e425c)"></div>
<div style="left:0;top:551px;width:1024px;height:1px;background:#3a2a3a"></div>
<div style="left:78px;top:552px;width:37px;height:24px;background:linear-gradient(#a89aa8,#8a7a88);border:1px solid #b8aab8"></div>
<div style="left:118px;top:552px;width:37px;height:24px;background:linear-gradient(#a08c9c,#806c7c);border:1px solid #a898a6"></div>
<div style="left:157px;top:552px;width:38px;height:24px;background:linear-gradient(#d8ccd6,#b0a2ae);border:1px solid #ddd"></div>
<div style="left:6px;top:553px;width:23px;height:23px;border-radius:50%;background:radial-gradient(circle at 50% 35%,#8cc4f0,#2a5a9a 70%,#22304a)"></div>
<svg style="left:0;top:0" width="1024" height="576">
<rect x="12" y="558" width="5" height="5" fill="#e85030"/><rect x="18" y="558" width="5" height="5" fill="#70b040"/><rect x="12" y="564" width="5" height="5" fill="#3090e0"/><rect x="18" y="564" width="5" height="5" fill="#f0c030"/>
<path d="M50 564h13c0-5-3-7-6-7-4 0-7 3-7 7s3 7 7 7c3 0 5-1 6-3" fill="none" stroke="#4aa8e8" stroke-width="2.500"/><ellipse cx="57" cy="563" rx="11" ry="5" fill="none" stroke="#e8b830" stroke-width="1" transform="rotate(-35 57 563)"/>
<rect x="87" y="555" width="19" height="18" rx="7" fill="#fff"/><path d="M88 561c0-4 3-6 6-6v3c-2 0-3 2-3 4 0 4 2 6 5 7l-3 3-2-2c-2-3-3-6-3-9z" fill="#2a70e8"/><circle cx="102" cy="570" r="4.500" fill="#e81818"/>
<circle cx="136" cy="564" r="8" fill="#88b840"/><circle cx="136" cy="564" r="4" fill="none" stroke="#e8f0d0" stroke-width="2"/><path d="M139 560l5-5M141 561l4-3" stroke="#e8e0d0" stroke-width="1.500"/>
<rect x="166" y="554" width="20" height="20" rx="4" fill="#f0f0f0"/><circle cx="176" cy="564" r="7.500" fill="#f06030"/><path d="M176 556.500a7.500 7.500 0 0 1 0 15z" fill="#30a8c0"/><circle cx="176" cy="564" r="3" fill="#f8f0c0"/>
<rect x="206" y="555" width="19" height="18" rx="5" fill="#3a88e8"/><rect x="210" y="561" width="8" height="6" rx="1.500" fill="#fff"/><path d="M219 563l3-2v6l-3-2z" fill="#fff"/>
<path d="M246 557h7l2 2h10v13h-19z" fill="#e8c878"/><rect x="246" y="563" width="19" height="9" fill="#f4e0a0"/><rect x="249" y="556" width="12" height="5" fill="#8ac0d8"/>
<path d="M889 565l3-3 3 3z" fill="#eee"/><path d="M903 562h2l3-3v10l-3-3h-2z" fill="#ddd"/><path d="M910 561c1.500 2 1.500 4 0 6" stroke="#ddd" fill="none"/>
<rect x="918" y="560" width="9" height="7" fill="#bbb"/><rect x="920" y="567" width="5" height="2" fill="#ccc"/>
<rect x="933" y="557" width="10" height="13" rx="1" fill="#e02850"/>
<path d="M950 559v10M950 559l6 1v5l-6-1z" fill="#ddd" stroke="#ddd"/><circle cx="956" cy="567" r="3" fill="#d82020"/>
</svg>
<span style="left:91px;top:558px;font:bold 5.500px/7px 'Liberation Sans',sans-serif;color:#2a70e8">Zalo</span>
<span style="left:100px;top:566px;font:bold 5.500px/7px 'Liberation Sans',sans-serif;color:#fff">3</span>
<span style="left:936px;top:559px;font:bold 8px/10px 'Liberation Sans',sans-serif;color:#fff">V</span>
<div style="left:965px;top:553px;width:46px;text-align:center;font-size:7.500px;line-height:11px;color:#f0e8f0">5:59 CH<br>01/09/2021</div>
<div style="left:1015px;top:551px;width:9px;height:25px;background:linear-gradient(#8a7a88,#5e4a5c);border-left:1px solid #9a8a98"></div>
</body></html>
